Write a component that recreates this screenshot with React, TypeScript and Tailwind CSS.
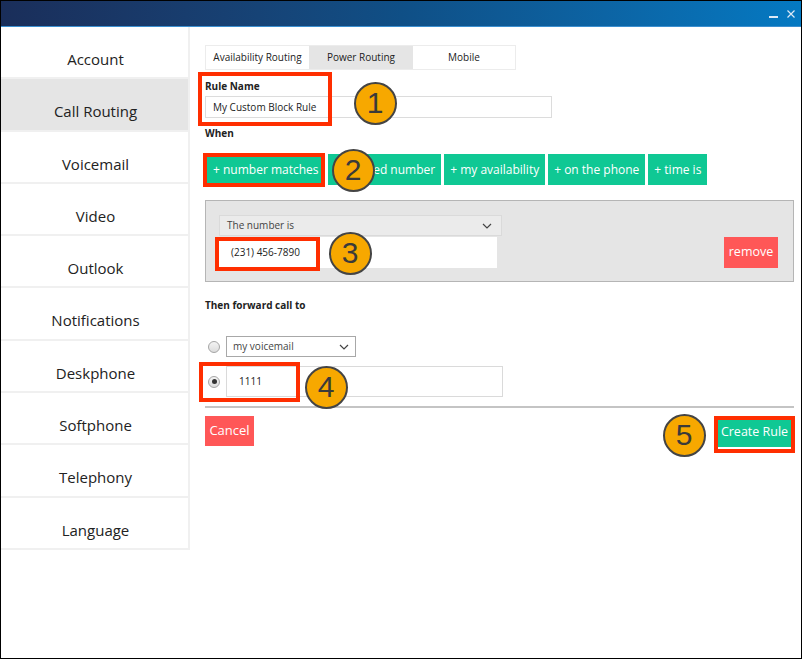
import React from "react";

const menu = [
  "Account",
  "Call Routing",
  "Voicemail",
  "Video",
  "Outlook",
  "Notifications",
  "Deskphone",
  "Softphone",
  "Telephony",
  "Language",
];

const conditions = [
  "+ number matches",
  "+ blocked number",
  "+ my availability",
  "+ on the phone",
  "+ time is",
];

const Chevron = () => (
  <svg width="10" height="6" viewBox="0 0 10 6" className="shrink-0">
    <path d="M1 1 L5 5 L9 1" fill="none" stroke="#444" strokeWidth="1.2" />
  </svg>
);

const Marker = ({ n, x, y }: { n: number; x: number; y: number }) => (
  <div
    className="absolute w-[43px] h-[43px] rounded-full bg-[#f7a800] border-2 border-[#444] flex items-center justify-center text-[30px] leading-none text-[#3a3a3a] font-['Liberation_Sans',Arial,sans-serif]"
    style={{ left: x - 21.5, top: y - 21.5 }}
  >
    {n}
  </div>
);

const Box = ({ x, y, w, h }: { x: number; y: number; w: number; h: number }) => (
  <div
    className="absolute border-4 border-[#ff2e00]"
    style={{ left: x, top: y, width: w, height: h }}
  />
);

const Radio = ({ checked }: { checked?: boolean }) => (
  <div className="w-[12px] h-[12px] rounded-full border border-[#a5a5a5] bg-linear-to-b from-[#f4f4f4] to-[#dcdcdc] flex items-center justify-center shrink-0">
    {checked && <div className="w-[5px] h-[5px] rounded-full bg-[#333]" />}
  </div>
);

const App = () => {
  return (
    <div className="relative w-[802px] h-[659px] border border-black bg-white overflow-hidden font-['Open_Sans',sans-serif] text-[#222]">
      {/* title bar */}
      <div className="h-[26px] bg-linear-to-r from-[#1a2e5a] via-[#0f4f86] to-[#0479c2] flex items-center justify-end pr-[6px] gap-[9px] border-b border-[#3b8fd0]">
        <svg width="9" height="3" viewBox="0 0 9 3" className="mt-[8px]">
          <rect width="9" height="2" fill="#dce9f6" />
        </svg>
        <svg width="8" height="8" viewBox="0 0 8 8">
          <path d="M0.5 0.5 L7.5 7.5 M7.5 0.5 L0.5 7.5" stroke="#dce9f6" strokeWidth="1.2" />
        </svg>
      </div>

      <div className="flex">
        {/* sidebar */}
        <div className="w-[189px] shrink-0 self-start border-r-2 border-[#f0f0f0]">
          {menu.map((item) => (
            <div
              key={item}
              className={`h-[52.3px] border-b-2 border-[#f0f0f0] flex justify-center pt-[22px] pl-[2px] text-[15px] leading-[20px] ${
                item === "Call Routing" ? "bg-[#e5e5e5]" : "bg-white"
              }`}
            >
              {item}
            </div>
          ))}
        </div>

        {/* main */}
        <div className="flex-1 pl-[15px] pr-[7px] text-[10px]">
          <div className="mt-[18px] flex h-[25px] w-[311px] border border-[#ececec]">
            <div className="w-[103px] flex items-center justify-center bg-white">
              Availability Routing
            </div>
            <div className="w-[104px] flex items-center justify-center bg-[#e5e5e5]">
              Power Routing
            </div>
            <div className="flex-1 flex items-center justify-center bg-white">
              Mobile
            </div>
          </div>

          <div className="mt-[9px] h-[14px] leading-[14px] font-bold">Rule Name</div>
          <div className="mt-[3px] h-[22px] w-[347px] border border-[#dcdcdc] flex items-center pl-[7px]">
            My Custom Block Rule
          </div>

          <div className="mt-[8px] h-[14px] leading-[14px] font-bold">When</div>

          <div className="mt-[14px] flex gap-[3px] ml-[2px] h-[31px]">
            {conditions.map((c) => (
              <div
                key={c}
                className="bg-[#0fc894] text-white text-[12px] px-[6px] flex items-center whitespace-nowrap"
              >
                {c}
              </div>
            ))}
          </div>

          <div className="mt-[15px] h-[82px] bg-[#e5e5e5] border border-[#b5b5b5] pl-[13px] pr-[15px] pt-[13px] flex items-end pb-[13px] justify-between">
            <div className="flex flex-col gap-[1px]">
              <div className="w-[283px] h-[21px] bg-[#ebebeb] border border-[#dadada] flex items-center justify-between pl-[7px] pr-[9px] text-[#444]">
                The number is
                <Chevron />
              </div>
              <div className="w-[278px] h-[31px] bg-white flex items-center pl-[12px]">
                (231) 456-7890
              </div>
            </div>
            <div className="h-[31px] w-[54px] bg-[#ff5757] text-white text-[12.5px] flex items-center justify-center">
              remove
            </div>
          </div>

          <div className="mt-[16px] h-[14px] leading-[14px] font-bold">Then forward call to</div>

          <div className="mt-[24px] flex items-center gap-[6px] pl-[3px]">
            <Radio />
            <div className="w-[130px] h-[21px] border border-[#a8a8a8] flex items-center justify-between pl-[6px] pr-[6px] text-[#444]">
              my voicemail
              <Chevron />
            </div>
          </div>

          <div className="mt-[9px] flex items-center gap-[6px] pl-[3px]">
            <Radio checked />
            <div className="w-[277px] h-[31px] border border-[#dadada] flex items-center pl-[12px]">
              1111
            </div>
          </div>

          <div className="mt-[9px] h-[2px] bg-[#c4c4c4]" />

          <div className="mt-[8px] flex justify-between items-start">
            <div className="w-[49px] h-[30px] bg-[#ff5757] text-white text-[13px] flex items-center justify-center">
              Cancel
            </div>
            <div className="mt-[1px] mr-[3px] w-[73px] h-[30px] bg-[#0fc894] text-white text-[12.5px] flex items-center justify-center">
              Create Rule
            </div>
          </div>
        </div>
      </div>

      {/* annotations */}
      <Box x={197} y={71} w={134} h={54} />
      <Box x={202} y={152} w={122} h={34} />
      <Box x={214} y={236} w={105} h={34} />
      <Box x={198} y={361} w={101} h={40} />
      <Box x={713} y={415} w={81} h={37} />
      <Marker n={1} x={374} y={102} />
      <Marker n={2} x={352} y={169} />
      <Marker n={3} x={349} y={252} />
      <Marker n={4} x={325} y={386} />
      <Marker n={5} x={683} y={434} />
    </div>
  );
};

export default App;
